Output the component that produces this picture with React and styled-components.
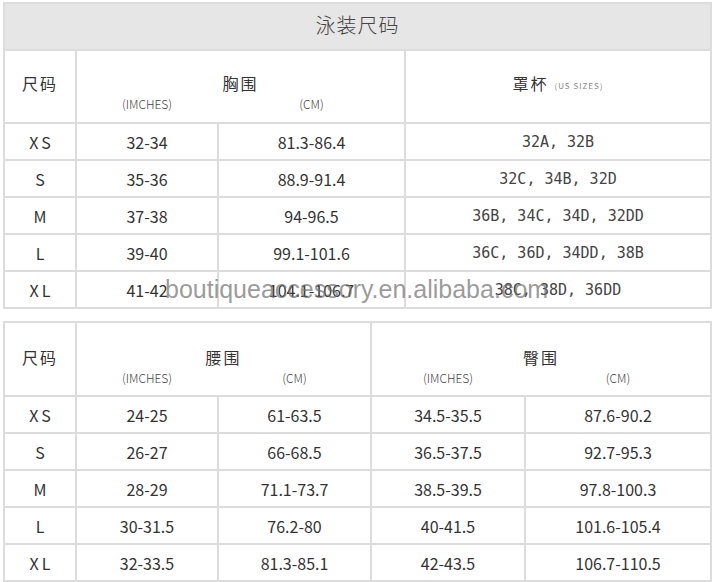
import React from 'react';
import styled, { createGlobalStyle } from 'styled-components';

const GlobalStyle = createGlobalStyle`
  html, body {
    margin: 0;
    padding: 0;
    background: #fff;
  }
  body {
    font-family: "Noto Sans CJK SC", "Noto Sans", sans-serif;
    color: #333;
  }
`;

const LINE = '#dcdcdc';

const swimRows = [
  ['XS', '32-34', '81.3-86.4', '32A, 32B'],
  ['S', '35-36', '88.9-91.4', '32C, 34B, 32D'],
  ['M', '37-38', '94-96.5', '36B, 34C, 34D, 32DD'],
  ['L', '39-40', '99.1-101.6', '36C, 36D, 34DD, 38B'],
  ['XL', '41-42', '104.1-106.7', '38C, 38D, 36DD'],
];

const bottomRows = [
  ['XS', '24-25', '61-63.5', '34.5-35.5', '87.6-90.2'],
  ['S', '26-27', '66-68.5', '36.5-37.5', '92.7-95.3'],
  ['M', '28-29', '71.1-73.7', '38.5-39.5', '97.8-100.3'],
  ['L', '30-31.5', '76.2-80', '40-41.5', '101.6-105.4'],
  ['XL', '32-33.5', '81.3-85.1', '42-43.5', '106.7-110.5'],
];

function App() {
  return (
    <>
      <GlobalStyle />
      <Styled.Page>
        <Styled.Table $cols="70px 140px 185px 304px">
          <Styled.Title>泳装尺码</Styled.Title>

          <Styled.Head $h={71} $pad={20}>
            <Styled.Label>尺码</Styled.Label>
          </Styled.Head>
          <Styled.Head $h={71} $pad={20} $span={2}>
            <Styled.Label>胸围</Styled.Label>
            <Styled.SubRow $cols="140px 185px">
              <span>(IMCHES)</span>
              <span>(CM)</span>
            </Styled.SubRow>
          </Styled.Head>
          <Styled.Head $h={71} $pad={20}>
            <Styled.Label>
              罩杯<Styled.Note>(US SIZES)</Styled.Note>
            </Styled.Label>
          </Styled.Head>

          {swimRows.map((row) => (
            <React.Fragment key={row[0]}>
              <Styled.Cell $size>{row[0]}</Styled.Cell>
              <Styled.Cell>{row[1]}</Styled.Cell>
              <Styled.Cell>{row[2]}</Styled.Cell>
              <Styled.Cell $mono>{row[3]}</Styled.Cell>
            </React.Fragment>
          ))}
        </Styled.Table>

        <Styled.Table $cols="70px 140px 151px 152px 184px" $gapTop>
          <Styled.Head $h={72} $pad={22}>
            <Styled.Label>尺码</Styled.Label>
          </Styled.Head>
          <Styled.Head $h={72} $pad={22} $span={2}>
            <Styled.Label>腰围</Styled.Label>
            <Styled.SubRow $cols="140px 151px">
              <span>(IMCHES)</span>
              <span>(CM)</span>
            </Styled.SubRow>
          </Styled.Head>
          <Styled.Head $h={72} $pad={22} $span={2}>
            <Styled.Label>臀围</Styled.Label>
            <Styled.SubRow $cols="152px 184px">
              <span>(IMCHES)</span>
              <span>(CM)</span>
            </Styled.SubRow>
          </Styled.Head>

          {bottomRows.map((row) => (
            <React.Fragment key={row[0]}>
              <Styled.Cell $size>{row[0]}</Styled.Cell>
              <Styled.Cell>{row[1]}</Styled.Cell>
              <Styled.Cell>{row[2]}</Styled.Cell>
              <Styled.Cell>{row[3]}</Styled.Cell>
              <Styled.Cell>{row[4]}</Styled.Cell>
            </React.Fragment>
          ))}
        </Styled.Table>

        {/* store watermark laid over the first table */}
        <Styled.Watermark>boutiqueaccessory.en.alibaba.com</Styled.Watermark>
      </Styled.Page>
    </>
  );
}

const Styled = {
  Page: styled.div`
    position: relative;
    width: 709px;
    padding: 2px 0 0 3px;
  `,
  Table: styled.div`
    display: grid;
    grid-template-columns: ${(p) => p.$cols};
    gap: 2px;
    background: ${LINE};
    border: 2px solid ${LINE};
    margin-top: ${(p) => (p.$gapTop ? '12px' : '0')};
  `,
  Title: styled.div`
    grid-column: 1 / -1;
    height: 45px;
    box-sizing: border-box;
    padding-bottom: 5px;
    background: #e6e6e6;
    display: flex;
    align-items: center;
    justify-content: center;
    font-size: 20px;
    font-weight: 300;
    letter-spacing: 1px;
    color: #444;
  `,
  Head: styled.div`
    grid-column: span ${(p) => p.$span || 1};
    height: ${(p) => p.$h}px;
    box-sizing: border-box;
    padding-top: ${(p) => p.$pad}px;
    background: #fff;
    display: flex;
    flex-direction: column;
    align-items: center;
  `,
  Label: styled.div`
    line-height: 24px;
    font-size: 16px;
    letter-spacing: 2px;
    color: #333;
    white-space: nowrap;
  `,
  Note: styled.span`
    margin-left: 6px;
    font-size: 8px;
    letter-spacing: 1px;
    color: #888;
    vertical-align: 1px;
  `,
  SubRow: styled.div`
    align-self: stretch;
    display: grid;
    grid-template-columns: ${(p) => p.$cols};
    gap: 2px;
    line-height: 18px;
    font-size: 12px;
    font-weight: 300;
    color: #444;
    text-align: center;
  `,
  Cell: styled.div`
    height: 35px;
    background: #fff;
    display: flex;
    align-items: center;
    justify-content: center;
    white-space: nowrap;
    color: ${(p) => (p.$mono ? '#444' : '#333')};
    font-size: ${(p) => (p.$mono ? '15px' : '16px')};
    font-family: ${(p) =>
      p.$mono ? '"DejaVu Sans Mono", monospace' : '"Noto Sans CJK SC", "Noto Sans", sans-serif'};
    letter-spacing: ${(p) => (p.$size ? '3px' : '0')};
    padding-left: ${(p) => (p.$size ? '3px' : '0')};
  `,
  Watermark: styled.div`
    position: absolute;
    left: 165px;
    top: 277px;
    font-family: "Liberation Sans", Arial, sans-serif;
    font-size: 25px;
    line-height: 25px;
    color: rgba(110, 110, 110, 0.7);
    white-space: nowrap;
    pointer-events: none;
  `,
};

export default App;
